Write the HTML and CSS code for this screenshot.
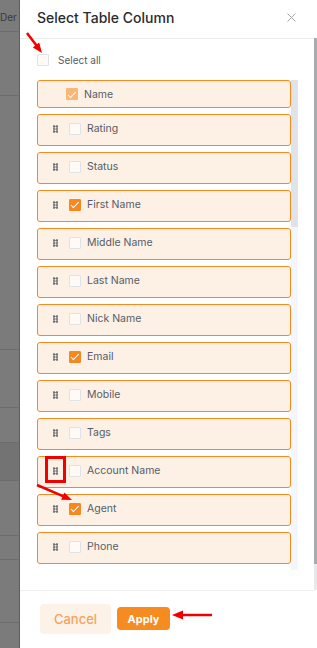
FILE: index.html
```html
<!DOCTYPE html>
<html lang="en">
  <head>
    <meta charset="UTF-8" />
    <meta name="viewport" content="width=device-width, initial-scale=1.0" />
    <title>Select Table Column</title>
    <link rel="stylesheet" href="styles.css">
  </head>
  <body>
    <div class="page">
      <div class="backdrop">
        <div class="bd-row bd-top"><span>Der</span></div>
        <div class="bd-row" style="height: 64px"></div>
        <div class="bd-row" style="height: 254px"></div>
        <div class="bd-row" style="height: 58px"></div>
        <div class="bd-row" style="height: 35px"></div>
        <div class="bd-row bd-dark" style="height: 38px"></div>
        <div class="bd-row" style="height: 55px"></div>
        <div class="bd-row" style="height: 24px"></div>
        <div class="bd-row" style="height: 63px"></div>
      </div>

      <div class="drawer">
        <div class="drawer-header">
          <h2 class="title">Select Table Column</h2>
          <button class="close" aria-label="Close">
            <svg width="9" height="9" viewBox="0 0 9 9"><path d="M0.5 0.5 L8.5 8.5 M8.5 0.5 L0.5 8.5" stroke="#a3a3a3" stroke-width="1" fill="none"/></svg>
          </button>
        </div>

        <div class="drawer-body">
          <label class="select-all">
            <span class="check"></span>
            <span>Select all</span>
          </label>

          <div class="column-area">
            <div class="column-list">
              <div class="column-row fixed">
                <span class="check checked disabled"></span>
                <span class="label">Name</span>
              </div>
              <div class="column-row"><span class="handle"></span><span class="check"></span><span class="label">Rating</span></div>
              <div class="column-row"><span class="handle"></span><span class="check"></span><span class="label">Status</span></div>
              <div class="column-row"><span class="handle"></span><span class="check checked"></span><span class="label">First Name</span></div>
              <div class="column-row"><span class="handle"></span><span class="check"></span><span class="label">Middle Name</span></div>
              <div class="column-row"><span class="handle"></span><span class="check"></span><span class="label">Last Name</span></div>
              <div class="column-row"><span class="handle"></span><span class="check"></span><span class="label">Nick Name</span></div>
              <div class="column-row"><span class="handle"></span><span class="check checked"></span><span class="label">Email</span></div>
              <div class="column-row"><span class="handle"></span><span class="check"></span><span class="label">Mobile</span></div>
              <div class="column-row"><span class="handle"></span><span class="check"></span><span class="label">Tags</span></div>
              <div class="column-row"><span class="handle"></span><span class="check"></span><span class="label">Account Name</span></div>
              <div class="column-row"><span class="handle"></span><span class="check checked"></span><span class="label">Agent</span></div>
              <div class="column-row"><span class="handle"></span><span class="check"></span><span class="label">Phone</span></div>
            </div>
            <div class="scrollbar"><div class="thumb"></div></div>
          </div>
        </div>

        <div class="drawer-footer">
          <button class="btn btn-cancel">Cancel</button>
          <button class="btn btn-apply">Apply</button>
        </div>
      </div>

      <div class="page-scroll"></div>
    </div>

    <!-- red review marks drawn on top of the screenshot -->
    <svg class="marks" width="317" height="648" viewBox="0 0 317 648">
      <g fill="#f20000" stroke="#f20000">
        <line x1="27" y1="33" x2="36.5" y2="45.5" stroke-width="2.5"/>
        <polygon points="42,53 32.8,47.4 39.2,42.6" stroke="none"/>
        <rect x="46.5" y="457.5" width="18" height="24" fill="none" stroke-width="3"/>
        <line x1="37" y1="485" x2="63.5" y2="496.3" stroke-width="2.5"/>
        <polygon points="72,500 61.2,499.8 64.4,492.4" stroke="none"/>
        <line x1="182" y1="615" x2="212" y2="615" stroke-width="2.5"/>
        <polygon points="172,615 183,610.5 183,619.5" stroke="none"/>
      </g>
    </svg>
  </body>
</html>
```

FILE: styles.css
```css
* {
  box-sizing: border-box;
}

body {
  margin: 0;
  font-family: Inter, "Noto Sans", sans-serif;
  background-color: #ffffff;
  overflow: hidden;
}

.page {
  display: flex;
  height: 648px;
}

/* dimmed table behind the drawer */
.backdrop {
  width: 20px;
  flex-shrink: 0;
  background-color: #7b7b7b;
  border-right: 1px solid #5e5e5e;
  overflow: hidden;
}

.bd-row {
  border-bottom: 1px solid #6c6c6c;
}

.bd-top {
  height: 32px;
  padding-top: 11px;
  font-size: 10px;
  color: #3a3a3a;
  white-space: nowrap;
}

.bd-dark {
  background-color: #737373;
}

.drawer {
  flex: 1;
  display: flex;
  flex-direction: column;
  background-color: #ffffff;
}

.drawer-header {
  height: 39px;
  display: flex;
  align-items: center;
  justify-content: space-between;
  padding: 0 18px 3px 17px;
  border-bottom: 1px solid #ececec;
}

.title {
  margin: 0;
  font-size: 14px;
  font-weight: 500;
  color: #2b2b2b;
}

.close {
  border: none;
  background: none;
  padding: 0;
  display: flex;
  cursor: pointer;
}

.drawer-body {
  flex: 1;
  display: flex;
  flex-direction: column;
  gap: 14px;
  padding: 15px 16px 20px 17px;
  min-height: 0;
}

.select-all {
  display: flex;
  align-items: center;
  gap: 9px;
  font-size: 10px;
  color: #555c66;
}

.check {
  width: 12px;
  height: 12px;
  flex-shrink: 0;
  border: 1px solid #dfe3e8;
  border-radius: 1px;
  background-color: #fffaf5;
  position: relative;
}

.check.checked {
  background-color: #f5891f;
  border-color: #f5891f;
}

.check.checked::after {
  content: "";
  position: absolute;
  left: 3px;
  top: 0.5px;
  width: 3px;
  height: 6.5px;
  border: solid #ffffff;
  border-width: 0 1.3px 1.3px 0;
  transform: rotate(45deg);
}

.check.disabled {
  background-color: #f8b779;
  border-color: #f8b779;
}

.column-area {
  flex: 1;
  display: flex;
  min-height: 0;
}

.column-list {
  flex: 1;
  overflow: hidden;
}

.scrollbar {
  width: 7px;
  flex-shrink: 0;
  background-color: #f3f6fa;
}

.thumb {
  height: 147px;
  background-color: #e0e4e9;
}

.column-row {
  height: 32px;
  display: flex;
  align-items: center;
  padding: 0 0 3px 15px;
  margin-bottom: 6px;
  background-color: #fdf1e6;
  border: 1px solid #f5891f;
  border-radius: 3px;
  font-size: 10.5px;
  color: #555c68;
}

.column-row.fixed {
  height: 28px;
  padding: 0 0 0 28px;
}

.handle {
  width: 5px;
  height: 8px;
  margin-right: 11px;
  background-image: radial-gradient(circle, #4a505a 0.95px, transparent 1.15px);
  background-size: 3px 2.7px;
  background-position: -0.5px 0;
}

.label {
  margin-left: 6px;
}

.drawer-footer {
  height: 58px;
  display: flex;
  align-items: center;
  gap: 6px;
  padding: 0 0 2px 20px;
  border-top: 1px solid #eeeeee;
}

.btn {
  border: none;
  border-radius: 4px;
  padding: 0;
  font-family: Inter, "Noto Sans", sans-serif;
  cursor: pointer;
}

.btn-cancel {
  width: 71px;
  height: 30px;
  background-color: #fdf2e7;
  color: #f4a25d;
  font-size: 13px;
  font-weight: 500;
}

.btn-apply {
  width: 53px;
  height: 23px;
  background-color: #f68b1f;
  color: #ffffff;
  font-size: 11px;
  font-weight: 700;
}

.page-scroll {
  width: 3px;
  flex-shrink: 0;
  background: linear-gradient(#ffffff 0 38px, #a8acaf 38px 564px, #e8e9ea 564px 590px, #ffffff 590px);
}

.marks {
  position: absolute;
  left: 0;
  top: 0;
  pointer-events: none;
}
```
